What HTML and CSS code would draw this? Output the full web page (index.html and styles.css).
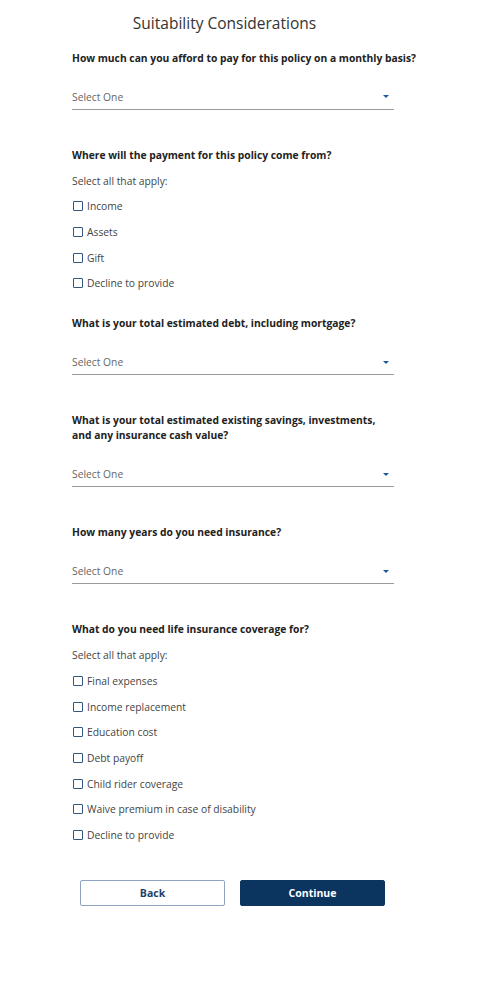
FILE: index.html
```html
<!DOCTYPE html>
<html>
<head>
<meta charset="utf-8">
<link rel="stylesheet" href="styles.css">
</head>
<body>
<div class="page">
  <h1 class="title">Suitability Considerations</h1>
  <form class="form">
    <section class="field">
      <p class="question">How much can you afford to pay for this policy on a monthly basis?</p>
      <div class="select"><span class="placeholder">Select One</span><span class="caret"></span></div>
    </section>
    <section class="field">
      <p class="question">Where will the payment for this policy come from?</p>
      <div class="checklist">
        <p class="hint">Select all that apply:</p>
        <label class="check"><span class="box"></span>Income</label>
        <label class="check"><span class="box"></span>Assets</label>
        <label class="check"><span class="box"></span>Gift</label>
        <label class="check"><span class="box"></span>Decline to provide</label>
      </div>
    </section>
    <section class="field">
      <p class="question">What is your total estimated debt, including mortgage?</p>
      <div class="select"><span class="placeholder">Select One</span><span class="caret"></span></div>
    </section>
    <section class="field">
      <p class="question">What is your total estimated existing savings, investments,<br>and any insurance cash value?</p>
      <div class="select"><span class="placeholder">Select One</span><span class="caret"></span></div>
    </section>
    <section class="field">
      <p class="question">How many years do you need insurance?</p>
      <div class="select"><span class="placeholder">Select One</span><span class="caret"></span></div>
    </section>
    <section class="field">
      <p class="question">What do you need life insurance coverage for?</p>
      <div class="checklist">
        <p class="hint">Select all that apply:</p>
        <label class="check"><span class="box"></span>Final expenses</label>
        <label class="check"><span class="box"></span>Income replacement</label>
        <label class="check"><span class="box"></span>Education cost</label>
        <label class="check"><span class="box"></span>Debt payoff</label>
        <label class="check"><span class="box"></span>Child rider coverage</label>
        <label class="check"><span class="box"></span>Waive premium in case of disability</label>
        <label class="check"><span class="box"></span>Decline to provide</label>
      </div>
    </section>
    <div class="actions">
      <button type="button" class="btn btn-back">Back</button>
      <button type="button" class="btn btn-continue">Continue</button>
    </div>
  </form>
</div>
</body>
</html>
```
FILE: styles.css
```css
* { box-sizing: border-box; }
body {
  margin: 0;
  font-family: "Open Sans", "Noto Sans", sans-serif;
  color: #333;
  background: #fff;
}
.page {
  width: 500px;
  padding-top: 11px;
}
.title {
  margin: 0;
  width: 449px;
  text-align: center;
  font-size: 15.5px;
  line-height: 24px;
  font-weight: 400;
  color: #333;
}
.form {
  padding-left: 72px;
  width: 394px;
  box-sizing: content-box;
  padding-top: 15.5px;
}
.field {
  margin-bottom: 38px;
}
.field:has(.checklist) {
  margin-bottom: 25px;
}
.question {
  margin: 0;
  font-size: 10.3px;
  line-height: 15px;
  font-weight: 700;
  color: #222;
}
.select {
  margin-top: 19px;
  width: 322px;
  height: 25px;
  border-bottom: 1px solid #9a9a9a;
  display: flex;
  align-items: center;
  justify-content: space-between;
  padding-right: 5px;
}
.placeholder {
  font-size: 10.3px;
  color: #666;
}
.caret {
  width: 0;
  height: 0;
  border-left: 3.5px solid transparent;
  border-right: 3.5px solid transparent;
  border-top: 3.5px solid #1d5a9c;
}
.checklist {
  margin-top: 10px;
  display: flex;
  flex-direction: column;
  gap: 9.7px;
}
.hint {
  margin: 0;
  font-size: 10.3px;
  line-height: 16px;
  color: #444;
}
.check {
  display: flex;
  align-items: center;
  gap: 4px;
  height: 16px;
  font-size: 10.3px;
  color: #444;
}
.box {
  width: 10px;
  height: 10px;
  margin-left: 1px;
  border: 1.5px solid #34557f;
  border-radius: 1px;
}
.actions {
  display: flex;
  gap: 15px;
  padding-left: 8px;
  margin-top: 37px;
}
.btn {
  width: 145px;
  height: 26px;
  font-family: inherit;
  font-size: 10.5px;
  font-weight: 700;
  border-radius: 2px;
  cursor: pointer;
}
.btn-back {
  background: #fff;
  color: #1c3f6b;
  border: 1px solid #8ea4c2;
}
.btn-continue {
  background: #0b345f;
  color: #fff;
  border: 1px solid #0b345f;
}
```
